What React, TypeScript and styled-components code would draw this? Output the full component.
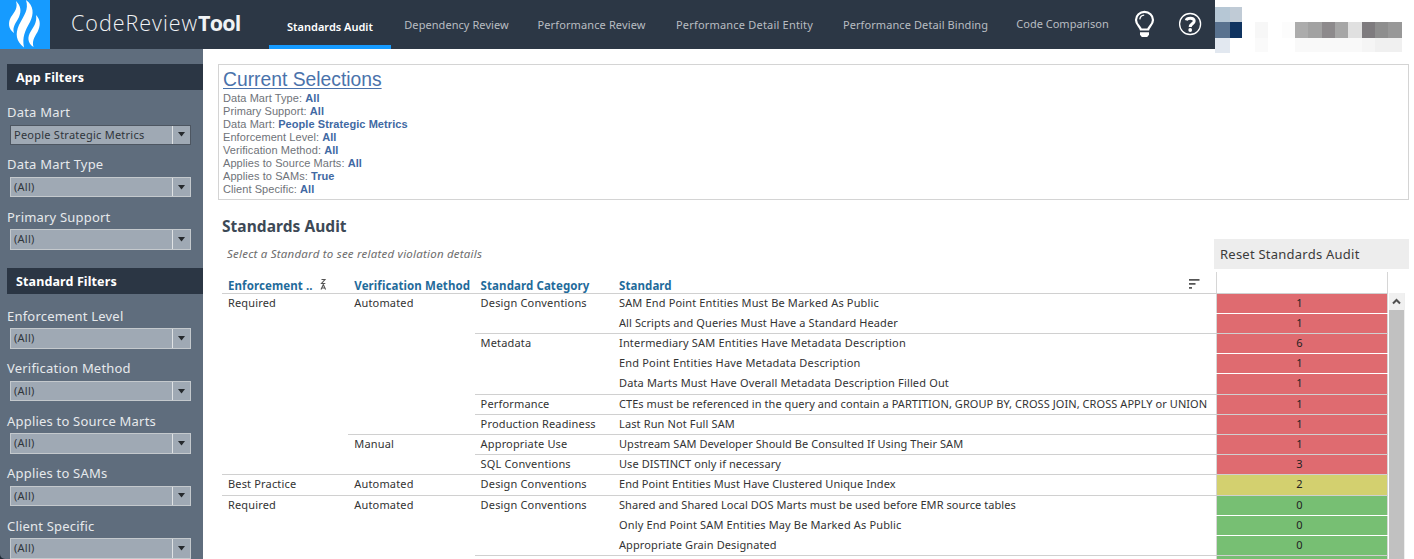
import React from "react";
import styled, { createGlobalStyle, css } from "styled-components";

const GlobalStyle = createGlobalStyle`
  * { box-sizing: border-box; }
  body {
    margin: 0;
    background: #fff;
    overflow: hidden;
    font-family: "Noto Sans", "Open Sans", sans-serif;
    color: #333;
  }
`;

const Page = styled.div`
  width: 1414px;
  height: 559px;
  overflow: hidden;
  display: flex;
  flex-direction: column;
  background: #fff;
`;

const TopRow = styled.header`
  display: flex;
  flex: none;
  height: 49px;
`;

const Bar = styled.div`
  display: flex;
  width: 1215px;
  height: 49px;
  background: #2c3745;
`;

const LogoBox = styled.div`
  width: 50px;
  height: 49px;
  background: #169bff;
  svg { display: block; }
`;

const Title = styled.div`
  width: 219px;
  padding-left: 21px;
  color: #f1f3f5;
  font-family: "Open Sans", sans-serif;
  font-size: 21.5px;
  font-weight: 300;
  line-height: 45px;
  letter-spacing: 0.98px;
  white-space: nowrap;
  b { font-weight: 700; letter-spacing: -0.75px; }
`;

const Tab = styled.div<{ $w: number; $active?: boolean; $up?: boolean; $ls?: number }>`
  width: ${(p) => p.$w}px;
  height: 49px;
  padding-top: ${(p) => (p.$active ? 17.5 : p.$up ? 15 : 16)}px;
  text-align: center;
  font-size: 11px;
  line-height: 17px;
  letter-spacing: ${(p) => p.$ls ?? 0}px;
  white-space: nowrap;
  color: #b9bdc2;
  ${(p) =>
    p.$active &&
    css`
      color: #fff;
      font-weight: 600;
      border-bottom: 4px solid #169bff;
    `}
`;

const IconSlot = styled.div<{ $w: number }>`
  width: ${(p) => p.$w}px;
  height: 49px;
  svg { display: block; }
`;

const Body = styled.div`
  display: flex;
  flex: 1;
  min-height: 0;
`;

const SideShade = styled.div`
  display: flex;
  background: #1f2a36;
`;

const Sidebar = styled.aside`
  width: 203px;
  padding: 15px 0 0 7px;
  background: #5f6d7d;
  border-bottom-left-radius: 5px;
  overflow: hidden;
`;

const SideHeading = styled.h2<{ $second?: boolean }>`
  height: 26px;
  margin: ${(p) => (p.$second ? "12px 0 8.5px" : "0 0 9px")};
  padding-left: 9px;
  background: #2b3644;
  color: #fff;
  font-size: 12.5px;
  font-weight: 700;
  line-height: 27px;
  letter-spacing: 0.12px;
`;

const Filter = styled.div`
  height: 52.45px;
`;

const FilterLabel = styled.div`
  height: 25.5px;
  font-size: 13px;
  line-height: 26px;
  letter-spacing: 0.2px;
  color: #e6e9ec;
  white-space: nowrap;
`;

const Select = styled.div<{ $on?: boolean }>`
  display: flex;
  width: 181.5px;
  height: 20.5px;
  margin-left: 2.5px;
  border: 1px solid ${(p) => (p.$on ? "#4d5661" : "#c4c9cd")};
  background: #9fa9b4;
  color: #2f353b;
  font-size: 11px;
  line-height: 18.5px;
`;

const SelectText = styled.span`
  flex: 1;
  padding-left: 3.5px;
  letter-spacing: 0.24px;
  white-space: nowrap;
`;

const Arrow = styled.span`
  display: flex;
  align-items: center;
  justify-content: center;
  width: 18.5px;
  border-left: 1px solid #dfe2e4;
`;

const Main = styled.main`
  flex: 1;
  padding: 15px 0 0 15px;
`;

const Selections = styled.section`
  width: 1191px;
  height: 136px;
  padding: 4px 0 0 4px;
  border: 1px solid #d4d4d4;
  font-family: "Liberation Sans", Arial, sans-serif;
  font-size: 11px;
  line-height: 13.05px;
  letter-spacing: 0.07px;
  color: #6f7379;
  b { color: #4169a3; }
`;

const SelectionsTitle = styled.h1`
  margin: 0 0 0.5px;
  color: #4a72ab;
  font-size: 19.3px;
  font-weight: 400;
  letter-spacing: 0;
  line-height: 22px;
  text-decoration: underline;
  text-decoration-thickness: 1px;
  text-underline-offset: 2px;
`;

const AuditHead = styled.div`
  display: flex;
  justify-content: space-between;
  width: 1191px;
  height: 72px;
`;

const AuditTitle = styled.h2`
  margin: 14px 0 0 4px;
  font-size: 15.5px;
  font-weight: 700;
  line-height: 24px;
  letter-spacing: 0.05px;
  color: #3d4956;
`;

const Hint = styled.p`
  margin: 6px 0 0 9px;
  font-size: 11.5px;
  font-style: italic;
  line-height: 20px;
  letter-spacing: 0.22px;
  color: #6d6d6d;
`;

const Reset = styled.div`
  width: 195px;
  height: 30px;
  margin-top: 39px;
  padding-left: 6px;
  background: #ededed;
  font-size: 13px;
  line-height: 31px;
  letter-spacing: 0.24px;
  color: #3b3b3b;
`;

const TableArea = styled.div`
  display: flex;
  margin-left: 4px;
`;

const Table = styled.div`
  width: 1166px;
`;

const HeadRow = styled.div`
  display: flex;
  height: 20.7px;
  font-size: 11.5px;
  font-weight: 700;
  line-height: 27px;
  letter-spacing: 0.09px;
  color: #1f6b9b;
`;

const HeadCell = styled.div<{ $w: number }>`
  display: flex;
  width: ${(p) => p.$w}px;
  padding-left: 6px;
  white-space: nowrap;
  svg { flex: none; margin-left: 5px; }
`;

const ValueHead = styled.div`
  width: 172px;
  border-left: 1px solid #d6d6d6;
  border-right: 1px solid #d6d6d6;
`;

const Group = styled.div`
  display: flex;
  flex: 1;
  border-top: 1px solid #d0d0d0;
  font-size: 11px;
  line-height: 18.8px;
`;

const Nested = styled.div`
  flex: 1;
  > ${Group}:first-child { border-top-color: transparent; margin-top: -1px; }
`;

const GroupLabel = styled.div<{ $w: number }>`
  width: ${(p) => p.$w}px;
  padding-left: 6px;
  letter-spacing: 0.16px;
  white-space: nowrap;
`;

const Rows = styled.div`
  flex: 1;
`;

const Row = styled.div`
  display: flex;
  height: 20.19px;
  & + & { border-top: 1px solid transparent; }
  &:first-child { height: 19.19px; }
`;

const RowText = styled.div<{ $ls: number }>`
  flex: 1;
  padding-left: 6px;
  white-space: nowrap;
  letter-spacing: ${(p) => p.$ls}px;
`;

const tones = { red: "#df6b70", yellow: "#d3d06f", green: "#77bf73" };
type Tone = keyof typeof tones;

const Value = styled.div<{ $tone: Tone }>`
  width: 172px;
  padding-right: 5px;
  border-left: 1px solid #d6d6d6;
  border-right: 1px solid #d6d6d6;
  background: ${(p) => tones[p.$tone]};
  background-clip: padding-box;
  text-align: center;
  color: #222;
`;

const Scroll = styled.div`
  width: 16px;
  height: 290px;
  margin: 21px 0 0 1px;
  background: #c1c1c1;
  border-right: 1px solid #eee;
`;

const ScrollButton = styled.div`
  display: flex;
  align-items: center;
  justify-content: center;
  height: 17px;
  background: #f0f0f0;
`;

const Mosaic = styled.div`
  width: 199px;
  height: 49px;
  svg { display: block; overflow: visible; }
`;

type RowData = { text: string; value?: number; tone: Tone; spacing?: number };
type Category = { name: string; rows: RowData[] };
type Method = { name: string; categories: Category[] };
type Level = { name: string; methods: Method[] };

const levels: Level[] = [
  {
    name: "Required",
    methods: [
      {
        name: "Automated",
        categories: [
          {
            name: "Design Conventions",
            rows: [
              { text: "SAM End Point Entities Must Be Marked As Public", value: 1, tone: "red", spacing: 0.15 },
              { text: "All Scripts and Queries Must Have a Standard Header", value: 1, tone: "red", spacing: 0.1 },
            ],
          },
          {
            name: "Metadata",
            rows: [
              { text: "Intermediary SAM Entities Have Metadata Description", value: 6, tone: "red", spacing: 0.18 },
              { text: "End Point Entities Have Metadata Description", value: 1, tone: "red", spacing: 0.18 },
              { text: "Data Marts Must Have Overall Metadata Description Filled Out", value: 1, tone: "red", spacing: 0.15 },
            ],
          },
          {
            name: "Performance",
            rows: [
              {
                text: "CTEs must be referenced in the query and contain a PARTITION, GROUP BY, CROSS JOIN, CROSS APPLY or UNION",
                value: 1,
                tone: "red",
                spacing: 0.065,
              },
            ],
          },
          {
            name: "Production Readiness",
            rows: [{ text: "Last Run Not Full SAM", value: 1, tone: "red", spacing: 0.13 }],
          },
        ],
      },
      {
        name: "Manual",
        categories: [
          {
            name: "Appropriate Use",
            rows: [
              { text: "Upstream SAM Developer Should Be Consulted If Using Their SAM", value: 1, tone: "red", spacing: 0.055 },
            ],
          },
          {
            name: "SQL Conventions",
            rows: [{ text: "Use DISTINCT only if necessary", value: 3, tone: "red", spacing: 0.07 }],
          },
        ],
      },
    ],
  },
  {
    name: "Best Practice",
    methods: [
      {
        name: "Automated",
        categories: [
          {
            name: "Design Conventions",
            rows: [{ text: "End Point Entities Must Have Clustered Unique Index", value: 2, tone: "yellow", spacing: 0.08 }],
          },
        ],
      },
    ],
  },
  {
    name: "Required",
    methods: [
      {
        name: "Automated",
        categories: [
          {
            name: "Design Conventions",
            rows: [
              {
                text: "Shared and Shared Local DOS Marts must be used before EMR source tables",
                value: 0,
                tone: "green",
                spacing: 0.055,
              },
              { text: "Only End Point SAM Entities May Be Marked As Public", value: 0, tone: "green", spacing: 0.14 },
              { text: "Appropriate Grain Designated", value: 0, tone: "green", spacing: 0.1 },
            ],
          },
          { name: "", rows: [{ text: "", tone: "green" }] },
        ],
      },
    ],
  },
];

const selections = [
  ["Data Mart Type", "All"],
  ["Primary Support", "All"],
  ["Data Mart", "People Strategic Metrics"],
  ["Enforcement Level", "All"],
  ["Verification Method", "All"],
  ["Applies to Source Marts", "All"],
  ["Applies to SAMs", "True"],
  ["Client Specific", "All"],
];

const mosaic: [number, number, number, number, string][] = [
  [0, 7, 15, 15, "#b6c7d5"],
  [15, 7, 12, 15, "#c0cbd6"],
  [0, 22, 15, 16, "#59728f"],
  [15, 22, 12, 16, "#0f3360"],
  [0, 38, 15, 15, "#e2e8f0"],
  [40, 22, 13, 16, "#f7f7f7"],
  [40, 38, 13, 14, "#fafafa"],
  [67, 22, 13, 16, "#fcfcfc"],
  [80, 22, 13, 16, "#acacac"],
  [93, 22, 14, 16, "#a2a2a2"],
  [107, 22, 13, 16, "#8d8a8c"],
  [120, 22, 13, 16, "#a6a6a6"],
  [133, 22, 14, 16, "#e0e0e0"],
  [147, 22, 13, 16, "#7e7b7e"],
  [160, 22, 13, 16, "#8e8e8e"],
  [173, 22, 14, 16, "#989898"],
  [80, 38, 67, 14, "#f9f9f9"],
  [147, 38, 13, 14, "#f5f5f5"],
  [160, 38, 27, 14, "#f0f0f0"],
];

function FilterField({ label, value = "(All)", on }: { label: string; value?: string; on?: boolean }) {
  return (
    <Filter>
      <FilterLabel>{label}</FilterLabel>
      <Select $on={on}>
        <SelectText>{value}</SelectText>
        <Arrow>
          <svg width="7" height="5" viewBox="0 0 7 5"><path d="M0 0h7L3.5 4.6z" fill="#25292d" /></svg>
        </Arrow>
      </Select>
    </Filter>
  );
}

export default function App() {
  return (
    <Page>
      <GlobalStyle />
      <TopRow>
        <Bar>
          <LogoBox>
            <svg width="50" height="49" viewBox="0 0 50 49" fill="#fff">
              <path d="M16 1C21 6 21.500 11 19 17C16 23 12 27 14 33C8 29 8 22 11 17C15 11 18 8 16 1Z" />
              <path d="M26 0C34 6 34 14 30 22C25 31 22 37 24 47.5C16 41 15 34 19 25C24 15 29 10 26 0Z" />
              <path d="M36 15C41 20 40.500 26 37.500 32C34 38 32 41 33.500 47C27.500 43 27 37 31 31C35 25 37 21 36 15Z" />
            </svg>
          </LogoBox>
          <Title>CodeReview<b>Tool</b></Title>
          <Tab $w={122} $active>Standards Audit</Tab>
          <Tab $w={131} $ls={0.06}>Dependency Review</Tab>
          <Tab $w={139} $ls={0.12}>Performance Review</Tab>
          <Tab $w={167} $ls={0.2}>Performance Detail Entity</Tab>
          <Tab $w={175} $ls={0.09}>Performance Detail Binding</Tab>
          <Tab $w={119} $up>Code Comparison</Tab>
          <IconSlot $w={48}>
            <svg width="48" height="49" viewBox="0 0 48 49" fill="none" stroke="#fff">
              <path d="M18.800 29.500C18.300 26.800 14 24.500 14 19.900a8.500 8 0 0 1 17 0C31 24.500 26.700 26.800 26.200 29.500Z" strokeWidth="2.200" />
              <path d="M17.800 19.300a4.800 4.800 0 0 1 4.400-4.200" strokeWidth="1.300" />
              <path d="M18 32.300h9v2.500l-1.800 2.300h-5.400L18 34.800z" fill="#fff" stroke="none" />
            </svg>
          </IconSlot>
          <IconSlot $w={45}>
            <svg width="45" height="49" viewBox="0 0 45 49" fill="none" stroke="#fff">
              <circle cx="20.100" cy="24" r="10.500" strokeWidth="1.300" />
              <path d="M16.300 20.300c.6-2.400 7.900-3.100 7.900.6 0 2.900-4 2.700-4 6.100" strokeWidth="3" />
              <circle cx="20.200" cy="30" r="1.900" fill="#fff" stroke="none" />
            </svg>
          </IconSlot>
        </Bar>
        <Mosaic>
          <svg width="199" height="49">
            {mosaic.map(([x, y, w, h, c]) => (
              <rect key={`${x}-${y}`} x={x} y={y} width={w} height={h} fill={c} />
            ))}
          </svg>
        </Mosaic>
      </TopRow>
      <Body>
        <SideShade>
          <Sidebar>
            <SideHeading>App Filters</SideHeading>
            <FilterField label="Data Mart" value="People Strategic Metrics" on />
            <FilterField label="Data Mart Type" />
            <FilterField label="Primary Support" />
            <SideHeading $second>Standard Filters</SideHeading>
            <FilterField label="Enforcement Level" />
            <FilterField label="Verification Method" />
            <FilterField label="Applies to Source Marts" />
            <FilterField label="Applies to SAMs" />
            <FilterField label="Client Specific" />
          </Sidebar>
        </SideShade>
        <Main>
          <Selections>
            <SelectionsTitle>Current Selections</SelectionsTitle>
            {selections.map(([k, v]) => (
              <div key={k}>{k}: <b>{v}</b></div>
            ))}
          </Selections>
          <AuditHead>
            <div>
              <AuditTitle>Standards Audit</AuditTitle>
              <Hint>Select a Standard to see related violation details</Hint>
            </div>
            <Reset>Reset Standards Audit</Reset>
          </AuditHead>
          <TableArea>
            <Table>
              <HeadRow>
                <HeadCell $w={126.3}>
                  Enforcement ..
                  <svg width="10" height="21" viewBox="0 0 10 21" fill="none" stroke="#555" strokeWidth="1.100">
                    <path d="M3.500 7.500h3.500l-3.500 4h3.800M3 17.500l2.300-5 2.300 5M3.800 16h3" />
                  </svg>
                </HeadCell>
                <HeadCell $w={126.3}>Verification Method</HeadCell>
                <HeadCell $w={138.4}>Standard Category</HeadCell>
                <HeadCell $w={570}>Standard</HeadCell>
                <svg width="33" height="20" viewBox="0 0 33 20" fill="#555">
                  <path d="M6 7h10.500v1.800H6zM6 11h6.500v1.800H6zM6 15h3v1.800H6z" />
                </svg>
                <ValueHead />
              </HeadRow>
              {levels.map((level, i) => (
                <Group key={i}>
                  <GroupLabel $w={126.3}>{level.name}</GroupLabel>
                  <Nested>
                    {level.methods.map((method) => (
                      <Group key={method.name}>
                        <GroupLabel $w={126.3}>{method.name}</GroupLabel>
                        <Nested>
                          {method.categories.map((category) => (
                            <Group key={category.name}>
                              <GroupLabel $w={138.4}>{category.name}</GroupLabel>
                              <Rows>
                                {category.rows.map((row) => (
                                  <Row key={row.text}>
                                    <RowText $ls={row.spacing ?? 0}>{row.text}</RowText>
                                    <Value $tone={row.tone}>{row.value}</Value>
                                  </Row>
                                ))}
                              </Rows>
                            </Group>
                          ))}
                        </Nested>
                      </Group>
                    ))}
                  </Nested>
                </Group>
              ))}
            </Table>
            <Scroll>
              <ScrollButton>
                <svg width="9" height="7" viewBox="0 0 9 7" fill="none" stroke="#505050" strokeWidth="2">
                  <path d="M1 5.500 4.500 2 8 5.500" />
                </svg>
              </ScrollButton>
            </Scroll>
          </TableArea>
        </Main>
      </Body>
    </Page>
  );
}
